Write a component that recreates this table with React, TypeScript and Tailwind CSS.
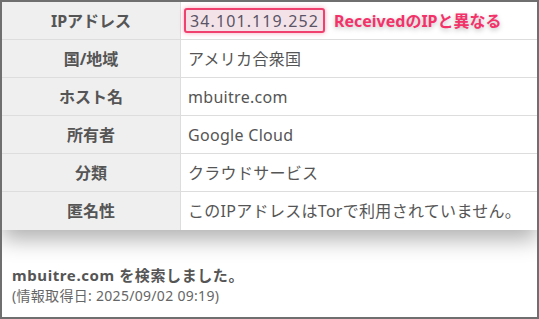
const rows: { label: string; value: string }[] = [
  { label: "国/地域", value: "アメリカ合衆国" },
  { label: "ホスト名", value: "mbuitre.com" },
  { label: "所有者", value: "Google Cloud" },
  { label: "分類", value: "クラウドサービス" },
  { label: "匿名性", value: "このIPアドレスはTorで利用されていません。" },
];

export default function App() {
  return (
    <div
      className="w-[539px] h-[319px] border-2 border-[#6f6f6f] bg-white text-[#555] overflow-hidden"
      style={{ fontFamily: '"Noto Sans", "Noto Sans CJK JP", sans-serif' }}
    >
      <div className="bg-white shadow-[0_10px_20px_rgba(0,0,0,0.3)]">
        <div className="flex h-[38px] border-b border-[#ddd]">
          <div className="w-[179px] shrink-0 bg-[#efefef] border-r border-[#ddd] flex items-center justify-center font-bold text-[16px]">
            IPアドレス
          </div>
          <div className="flex items-center pl-[3px] gap-[9px]">
            <span className="px-[4px] h-[25px] flex items-center rounded-[3px] border-2 border-[#f0406e] bg-[#f3e3e8] text-[16px] tracking-[1.1px] text-[#5a5466] shadow-[0_0_5px_rgba(240,64,110,0.45)]">
              34.101.119.252
            </span>
            <span className="font-bold text-[16px] text-[#f4326a] [text-shadow:0_2px_5px_rgba(0,0,0,0.25)]">
              ReceivedのIPと異なる
            </span>
          </div>
        </div>
        {rows.map((r, i) => (
          <div
            key={r.label}
            className={
              i < rows.length - 1
                ? "flex h-[38px] border-b border-[#ddd]"
                : "flex h-[38px]"
            }
          >
            <div className="w-[179px] shrink-0 bg-[#efefef] border-r border-[#ddd] flex items-center justify-center font-bold text-[16px]">
              {r.label}
            </div>
            <div className="flex items-center pl-[7px] text-[16px] tracking-[0.3px]">{r.value}</div>
          </div>
        ))}
      </div>
      <div className="pt-[35px] pl-[10px]">
        <div className="font-bold text-[15px] leading-[21px] tracking-[0.6px] text-[#555]">
          mbuitre.com を検索しました。
        </div>
        <div className="text-[14px] leading-[19px] tracking-[0.3px] text-[#666]">
          (情報取得日: 2025/09/02 09:19)
        </div>
      </div>
    </div>
  );
}
